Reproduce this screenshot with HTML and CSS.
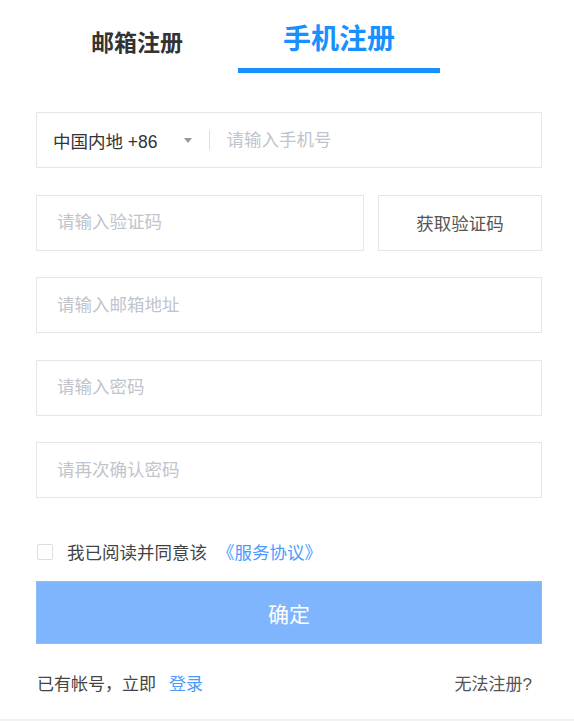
FILE: index.html
```html
<!DOCTYPE html>
<html>

<head>
    <meta charset='UTF-8'>
    <meta name='viewport' content='width=device-width, initial-scale=1.0'>
    <title>手机注册</title>
    <link rel="stylesheet" href="styles.css">
</head>

<body>
    <div class="register">
        <!-- 顶部切换 -->
        <div class="tabs">
            <div class="tab tab-email">邮箱注册</div>
            <div class="tab tab-phone active">手机注册</div>
        </div>

        <form class="form">
            <div class="field field-phone">
                <div class="area">中国内地 +86</div>
                <span class="arrow"></span>
                <span class="divider"></span>
                <input class="phone-input" type="text" placeholder="请输入手机号">
            </div>

            <div class="code-row">
                <div class="field field-code">
                    <input type="text" placeholder="请输入验证码">
                </div>
                <button type="button" class="code-btn">获取验证码</button>
            </div>

            <div class="field">
                <input type="text" placeholder="请输入邮箱地址">
            </div>
            <div class="field">
                <input type="password" placeholder="请输入密码">
            </div>
            <div class="field">
                <input type="password" placeholder="请再次确认密码">
            </div>

            <label class="agree">
                <span class="check"></span>
                <span>我已阅读并同意该</span>
                <a class="link agree-link" href="#">《服务协议》</a>
            </label>

            <button type="button" class="submit">确定</button>

            <div class="footer">
                <div>已有帐号，立即<a class="link login-link" href="#">登录</a></div>
                <a class="help" href="#">无法注册?</a>
            </div>
        </form>
    </div>
</body>

</html>
```

FILE: styles.css
```css
* {
    box-sizing: border-box;
}

body {
    margin: 0;
    background: #fff;
    font-family: "Liberation Sans", "Noto Sans CJK SC", sans-serif;
    color: #333;
    border-bottom: 2px solid #f2f2f2;
    height: 721px;
}

.register {
    width: 506px;
    margin-left: 36px;
}

/* 顶部标签 */
.tabs {
    display: flex;
}

.tab {
    width: 202px;
    height: 73px;
    text-align: center;
    line-height: 40px;
    font-weight: bold;
    border-bottom: 5px solid transparent;
}

.tab-email {
    padding-top: 23px;
    font-size: 23px;
    color: #333;
}

.tab-phone {
    padding-top: 20px;
    font-size: 28px;
}

.tab.active {
    color: #1890ff;
    border-bottom-color: #1890ff;
}

.form {
    margin-top: 39px;
}

/* 输入框 */
.field {
    height: 56px;
    margin-bottom: 26.5px;
    border: 1px solid #e4e6eb;
    display: flex;
    align-items: center;
}

.field input {
    flex: 1;
    height: 100%;
    border: none;
    outline: none;
    padding: 0 0 0 20px;
    font-family: inherit;
    font-size: 17.5px;
    color: #333;
    background: transparent;
}

.field input::placeholder {
    color: #c0c4cc;
}

.field-phone {
    padding-left: 16px;
}

.area {
    font-size: 17.5px;
    color: #333;
}

.arrow {
    margin-left: 26px;
    width: 0;
    height: 0;
    border-left: 4.5px solid transparent;
    border-right: 4.5px solid transparent;
    border-top: 5px solid #999;
}

.divider {
    width: 1px;
    height: 20px;
    margin-left: 17px;
    background: #dcdfe6;
}

.field-phone .phone-input {
    padding-left: 17px;
}

.code-row {
    display: flex;
    gap: 14px;
}

.field-code {
    width: 328px;
}

.code-btn {
    flex: 1;
    height: 56px;
    border: 1px solid #e4e6eb;
    background: #fff;
    font-family: inherit;
    font-size: 17.5px;
    color: #555;
}

/* 协议 */
.agree {
    display: flex;
    align-items: center;
    margin-top: 41px;
    font-size: 17.5px;
    color: #444;
}

.check {
    width: 16px;
    height: 16px;
    margin: 0 14px 0 1px;
    border: 1px solid #dcdfe6;
    border-radius: 2px;
}

.link {
    color: #4a9bff;
    text-decoration: none;
}

.agree-link {
    margin-left: 10px;
}

.submit {
    display: block;
    width: 100%;
    height: 63px;
    margin-top: 17px;
    border: 1px solid #8cbcff;
    background: #7fb5fd;
    color: #fff;
    font-family: inherit;
    font-size: 21px;
}

.footer {
    display: flex;
    justify-content: space-between;
    margin-top: 26px;
    padding: 0 10px 0 1px;
    font-size: 17px;
    color: #444;
}

.login-link {
    margin-left: 13px;
}

.help {
    color: #555;
    text-decoration: none;
}
```
